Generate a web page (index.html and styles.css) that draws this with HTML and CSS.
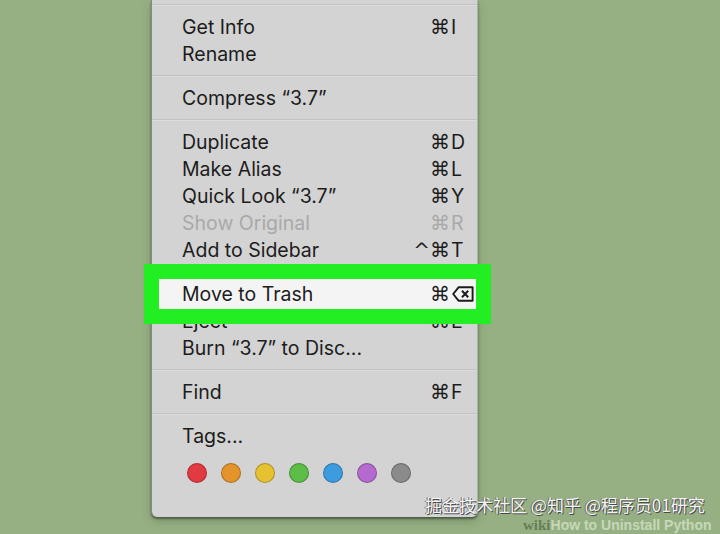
FILE: index.html
```html
<!DOCTYPE html>
<html lang="en">
<head>
    <meta charset="UTF-8">
    <meta name="viewport" content="width=device-width, initial-scale=1.0">
    <title>How to Uninstall Python</title>
    <link rel="stylesheet" href="styles.css">
</head>
<body>
    <div class="menu">
        <div class="sep"></div>
        <div class="item"><span>Get Info</span><span class="keys"><span class="mod">⌘</span><span class="key">I</span></span></div>
        <div class="item"><span>Rename</span></div>
        <div class="sep"></div>
        <div class="item"><span>Compress “3.7”</span></div>
        <div class="sep"></div>
        <div class="item"><span>Duplicate</span><span class="keys"><span class="mod">⌘</span><span class="key">D</span></span></div>
        <div class="item"><span>Make Alias</span><span class="keys"><span class="mod">⌘</span><span class="key">L</span></span></div>
        <div class="item"><span>Quick Look “3.7”</span><span class="keys"><span class="mod">⌘</span><span class="key">Y</span></span></div>
        <div class="item disabled"><span>Show Original</span><span class="keys"><span class="mod">⌘</span><span class="key">R</span></span></div>
        <div class="item"><span>Add to Sidebar</span><span class="keys"><span class="mod">^⌘</span><span class="key">T</span></span></div>
        <div class="sep"></div>
        <div class="item selected"><span>Move to Trash</span><span class="keys"><span class="mod">⌘</span><span class="key">
            <svg class="del" width="22" height="16" viewBox="0 0 22 16"><path d="M6.5 1.3 H20.6 V14.7 H6.5 L1.2 8 Z" fill="none" stroke="#1c1c1c" stroke-width="1.9" stroke-linejoin="round"/><path d="M10 4.8 L16.2 11.2 M16.2 4.8 L10 11.2" stroke="#1c1c1c" stroke-width="2"/></svg>
        </span></span></div>
        <div class="item"><span>Eject</span><span class="keys"><span class="mod">⌘</span><span class="key">E</span></span></div>
        <div class="item"><span>Burn “3.7” to Disc...</span></div>
        <div class="sep"></div>
        <div class="item"><span>Find</span><span class="keys"><span class="mod">⌘</span><span class="key">F</span></span></div>
        <div class="sep"></div>
        <div class="item"><span>Tags...</span></div>
        <div class="tags">
            <span class="dot red"></span>
            <span class="dot orange"></span>
            <span class="dot yellow"></span>
            <span class="dot green"></span>
            <span class="dot blue"></span>
            <span class="dot purple"></span>
            <span class="dot gray"></span>
        </div>
    </div>

    <div class="watermark">掘金技术社区 @知乎 @程序员01研究</div>
    <div class="wikihow"><b>wiki</b>How to Uninstall Python</div>
</body>
</html>
```

FILE: styles.css
```css
body {
    margin: 0;
    height: 534px;
    overflow: hidden;
    background-color: #97b083;
    font-family: Inter, "DejaVu Sans", sans-serif;
    position: relative;
}
.menu {
    margin-left: 151px;
    width: 327px;
    box-sizing: border-box;
    padding: 4px 0 34px;
    background-color: #d3d3d3;
    border-left: 1px solid #7f8f74;
    border-right: 1px solid #a9b79f;
    border-radius: 0 0 6px 6px;
    box-shadow: 0 2px 2px rgba(40, 50, 35, 0.55), 0 4px 10px rgba(40, 50, 35, 0.25);
}
.sep {
    height: 1px;
    background-color: #c2c2c2;
    border-bottom: 1px solid #dcdcdc;
    margin-bottom: 7px;
    margin-top: 8px;
}
.sep:first-child {
    margin-top: 0;
}
.item {
    display: flex;
    align-items: center;
    height: 27px;
    padding: 0 11px 0 30px;
    font-size: 19.5px;
    color: #1c1c1c;
}
.item.disabled {
    color: #a9a9a9;
}
.keys {
    margin-left: auto;
    display: flex;
    align-items: center;
}
.mod {
    font-family: "DejaVu Sans", sans-serif;
    font-size: 20px;
}
.key {
    width: 15px;
    padding-left: 1px;
    display: flex;
    align-items: center;
}
.selected {
    position: relative;
    z-index: 2;
}
.selected::before {
    content: "";
    position: absolute;
    top: -1px;
    bottom: -2px;
    left: 7px;
    right: 1px;
    z-index: -1;
    background-color: #f4f4f4;
    box-shadow: 0 0 0 15px #22ef22;
}
.del {
    display: block;
    flex-shrink: 0;
    margin-left: 1px;
}
.tags {
    display: flex;
    gap: 14px;
    padding: 14px 0 0 35px;
}
.dot {
    width: 18px;
    height: 18px;
    border-radius: 50%;
    border: 1px solid rgba(0, 0, 0, 0.25);
}
.red { background-color: #e13a40; }
.orange { background-color: #e5932b; }
.yellow { background-color: #e6c230; }
.green { background-color: #5cbd47; }
.blue { background-color: #3c9cdf; }
.purple { background-color: #b46acf; }
.gray { background-color: #8b8b8b; }
.watermark {
    position: absolute;
    left: 425px;
    top: 494px;
    font-family: "Noto Sans CJK SC", sans-serif;
    font-size: 17px;
    line-height: 22px;
    color: #f4f4f4;
    text-shadow: 1px 1px 0 #4a4a4a, -1px 0 0 #6a6a6a;
    white-space: nowrap;
}
.wikihow {
    position: absolute;
    left: 523px;
    top: 517px;
    font-family: "Liberation Sans", sans-serif;
    font-weight: bold;
    font-size: 14px;
    line-height: 16px;
    color: rgba(220, 235, 210, 0.7);
    white-space: nowrap;
}
.wikihow b {
    font-family: "Liberation Serif", serif;
    font-size: 15px;
    color: rgba(70, 90, 60, 0.6);
}
```
